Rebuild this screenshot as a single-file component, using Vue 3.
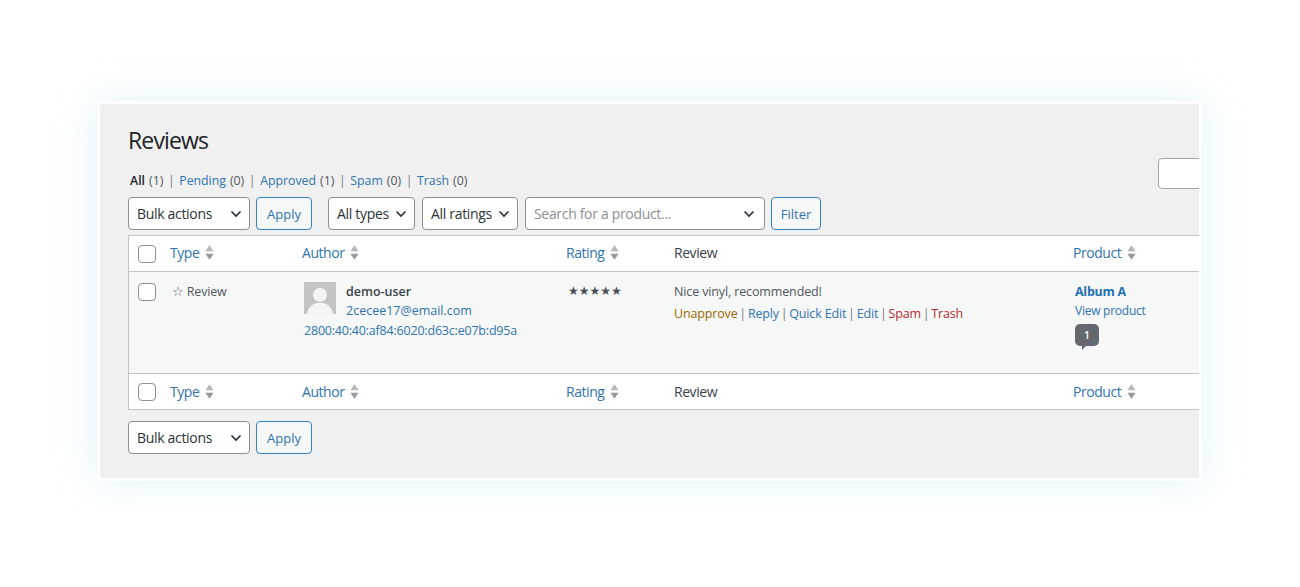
<template>
  <div class="page">
    <div class="frame">
      <h1 class="title">Reviews</h1>

      <div class="status-row">
        <ul class="status-list">
          <li v-for="(s, i) in statuses" :key="s.name">
            <span v-if="i" class="sep">|</span>
            <a :class="{ current: i === 0 }">{{ s.name }}</a>
            <span class="count">({{ s.count }})</span>
          </li>
        </ul>
        <input class="search-input" type="text" />
      </div>

      <div class="actions">
        <div class="select bulk">Bulk actions<svg class="chev" viewBox="0 0 12 8"><path d="M1.5 1.500 6 6l4.500-4.500" /></svg></div>
        <button class="btn">Apply</button>
        <div class="select types">All types<svg class="chev" viewBox="0 0 12 8"><path d="M1.5 1.500 6 6l4.500-4.500" /></svg></div>
        <div class="select ratings">All ratings<svg class="chev" viewBox="0 0 12 8"><path d="M1.5 1.500 6 6l4.500-4.500" /></svg></div>
        <div class="select product">Search for a product...<svg class="chev" viewBox="0 0 12 8"><path d="M1.5 1.500 6 6l4.500-4.500" /></svg></div>
        <button class="btn filter">Filter</button>
      </div>

      <table class="reviews">
        <colgroup>
          <col class="c-check" />
          <col class="c-type" />
          <col class="c-author" />
          <col class="c-rating" />
          <col class="c-review" />
          <col class="c-product" />
        </colgroup>
        <thead>
          <tr>
            <th><span class="check"></span></th>
            <th v-for="h in heads" :key="h.label">
              <a v-if="h.sort" class="sort">{{ h.label }}<svg class="arrows" viewBox="0 0 10 16"><path class="up" d="M5 0l4.500 6.500h-9z" /><path class="down" d="M5 16 .5 9.500h9z" /></svg></a>
              <span v-else>{{ h.label }}</span>
            </th>
          </tr>
        </thead>
        <tbody>
          <tr>
            <td><span class="check"></span></td>
            <td class="type-cell">☆ Review</td>
            <td>
              <div class="author-top">
                <svg class="avatar" viewBox="0 0 32 32">
                  <rect width="32" height="32" fill="#c4c4c4" />
                  <circle cx="16" cy="13" r="7" fill="#f4f4f4" />
                  <path d="M3 32c.5-6 5-10 10-11h6c5 1 9.500 5 10 11z" fill="#f4f4f4" />
                </svg>
                <div class="author-text">
                  <strong>demo-user</strong>
                  <a>2cecee17@email.com</a>
                </div>
              </div>
              <a class="ip">2800:40:40:af84:6020:d63c:e07b:d95a</a>
            </td>
            <td class="stars">★★★★★</td>
            <td>
              <div class="review-text">Nice vinyl, recommended!</div>
              <div class="row-actions">
                <a class="unapprove">Unapprove</a><i>|</i><a>Reply</a><i>|</i><a>Quick Edit</a><i>|</i><a>Edit</a><i>|</i><a class="danger">Spam</a><i>|</i><a class="danger">Trash</a>
              </div>
            </td>
            <td>
              <a class="album">Album A</a>
              <a class="view">View product</a>
              <span class="bubble">1</span>
            </td>
          </tr>
        </tbody>
        <tfoot>
          <tr>
            <th><span class="check"></span></th>
            <th v-for="h in heads" :key="h.label">
              <a v-if="h.sort" class="sort">{{ h.label }}<svg class="arrows" viewBox="0 0 10 16"><path class="up" d="M5 0l4.500 6.500h-9z" /><path class="down" d="M5 16 .5 9.500h9z" /></svg></a>
              <span v-else>{{ h.label }}</span>
            </th>
          </tr>
        </tfoot>
      </table>

      <div class="actions bottom">
        <div class="select bulk">Bulk actions<svg class="chev" viewBox="0 0 12 8"><path d="M1.5 1.500 6 6l4.500-4.500" /></svg></div>
        <button class="btn">Apply</button>
      </div>
    </div>
  </div>
</template>

<script setup>
const statuses = [
  { name: 'All', count: 1 },
  { name: 'Pending', count: 0 },
  { name: 'Approved', count: 1 },
  { name: 'Spam', count: 0 },
  { name: 'Trash', count: 0 }
]

const heads = [
  { label: 'Type', sort: true },
  { label: 'Author', sort: true },
  { label: 'Rating', sort: true },
  { label: 'Review', sort: false },
  { label: 'Product', sort: true }
]
</script>

<style>
html, body {
  margin: 0;
  background: #fff;
}
</style>

<style scoped>
.page {
  width: 1300px;
  height: 587px;
  padding: 101px 0 0 97px;
  box-sizing: border-box;
  overflow: hidden;
  font-family: "Open Sans", "Noto Sans", sans-serif;
  color: #3c434a;
}

.frame {
  width: 1105px;
  height: 380px;
  box-sizing: border-box;
  padding: 0 0 0 28px;
  background: #f0f0f1;
  border: 3px solid #fff;
  box-shadow: 0 0 38px rgba(130, 210, 235, 0.26);
  overflow: hidden;
}

.title {
  margin: 0;
  padding-top: 19px;
  height: 35px;
  font-size: 23px;
  line-height: 34px;
  font-weight: 400;
  letter-spacing: -0.85px;
  color: #1d2327;
}

.status-row {
  display: flex;
  justify-content: space-between;
  align-items: flex-end;
  height: 31px;
}

.status-list {
  display: flex;
  list-style: none;
  margin: 0 0 0 2px;
  padding: 0;
  font-size: 12.300px;
  line-height: 16px;
}

.status-list a {
  color: #2f74ad;
}

.status-list a.current {
  color: #1d2327;
  font-weight: 600;
}

.count {
  color: #50575e;
  margin-left: 4px;
}

.sep {
  color: #787c82;
  margin: 0 4.600px;
}

.search-input {
  width: 200px;
  height: 31px;
  box-sizing: border-box;
  flex: none;
  margin-right: -159px;
  border: 1px solid #a0a5aa;
  border-radius: 4px;
  background: #fff;
}

.actions {
  display: flex;
  align-items: center;
  gap: 6px;
  margin-top: 8px;
  height: 33px;
  font-size: 14px;
  letter-spacing: -0.32px;
}

.select {
  display: flex;
  align-items: center;
  justify-content: space-between;
  box-sizing: border-box;
  height: 33px;
  padding: 0 7px 0 8px;
  background: #fff;
  border: 1px solid #8c8f94;
  border-radius: 4px;
  color: #2c3338;
  white-space: nowrap;
}

.bulk { width: 122px; }
.types { width: 87px; margin-left: 10px; }
.ratings { width: 96px; margin-left: 1px; }
.product {
  width: 240px;
  margin-left: 1px;
  color: #8c8f94;
  padding-right: 9px;
}

.chev {
  width: 12px;
  height: 8px;
  flex: none;
  fill: none;
  stroke: #2c3338;
  stroke-width: 1.7;
}

.btn {
  height: 33px;
  width: 56px;
  padding: 0;
  background: #f6f7f7;
  border: 1px solid #3582c4;
  border-radius: 4px;
  color: #2f74ad;
  font: inherit;
  font-size: 13px;
  letter-spacing: 0;
}

.filter { width: 50px; }

.reviews {
  width: 1120px;
  margin-top: 5px;
  table-layout: fixed;
  border-collapse: separate;
  border-spacing: 0;
  background: #fff;
  border: 1px solid #c3c4c7;
  border-right: 0;
  font-size: 12.500px;
}

.c-check { width: 41px; }
.c-type { width: 132px; }
.c-author { width: 264px; }
.c-rating { width: 108px; }
.c-review { width: 399px; }
.c-product { width: 176px; }

th {
  padding: 0;
  box-sizing: content-box;
  text-align: left;
  font-size: 14px;
  font-weight: 400;
  letter-spacing: -0.45px;
  color: #3c434a;
}

thead th {
  height: 33px;
  padding-bottom: 2px;
  border-bottom: 1px solid #c3c4c7;
}

thead th:first-child {
  height: 35px;
  padding-bottom: 0;
}

tfoot th {
  height: 35px;
  border-top: 1px solid #c3c4c7;
}

tbody tr {
  background: #f6f7f7;
}

td {
  height: 101px;
  padding: 10px 0 0;
  box-sizing: border-box;
  vertical-align: top;
  line-height: 19px;
}

td a,
.view {
  color: #2f74ad;
}

.check {
  display: block;
  width: 16px;
  height: 16px;
  margin-left: 9px;
  background: #fff;
  border: 1px solid #8c8f94;
  border-radius: 4px;
}

td .check {
  margin-top: 1px;
}

.sort {
  display: inline-flex;
  align-items: center;
  color: #2f74ad;
}

.arrows {
  width: 9px;
  height: 15px;
  margin-left: 6px;
}

.up { fill: #b4b6b9; }
.down { fill: #96999d; }

.type-cell {
  padding-left: 2px;
  letter-spacing: -0.2px;
  color: #50575e;
}

.author-top {
  display: flex;
  gap: 10px;
  margin-left: 2px;
}

.avatar {
  width: 32px;
  height: 32px;
  flex: none;
}

.author-text {
  display: flex;
  flex-direction: column;
}

.author-text strong {
  font-weight: 600;
  color: #3c434a;
}

.ip {
  display: block;
  margin: 1px 0 0 2px;
  letter-spacing: -0.2px;
  white-space: nowrap;
}

.stars {
  padding-left: 2px;
  font-family: "DejaVu Sans", sans-serif;
  font-size: 12px;
  color: #484e54;
}

.review-text {
  letter-spacing: -0.13px;
  color: #50575e;
}

.row-actions {
  margin-top: 3px;
  letter-spacing: -0.15px;
  white-space: nowrap;
}

.row-actions i {
  margin: 0 1.800px;
  font-style: normal;
  color: #787c82;
}

.unapprove { color: #996800; }
.danger { color: #b32d2e; }

.album {
  display: block;
  margin-left: 2px;
  font-weight: 700;
  letter-spacing: -0.25px;
  color: #2271b1;
}

.view {
  display: block;
  margin-left: 2px;
  font-size: 12px;
  letter-spacing: -0.25px;
}

.bubble {
  position: relative;
  display: block;
  width: 24px;
  height: 22px;
  margin: 4px 0 0 2px;
  border-radius: 5px;
  background: #646970;
  color: #fff;
  font-size: 10.500px;
  font-weight: 600;
  line-height: 22px;
  text-align: center;
}

.bubble::after {
  content: "";
  position: absolute;
  left: 7px;
  top: 21px;
  border-top: 5px solid #646970;
  border-right: 5px solid transparent;
}

.actions.bottom {
  margin-top: 11px;
}
</style>
